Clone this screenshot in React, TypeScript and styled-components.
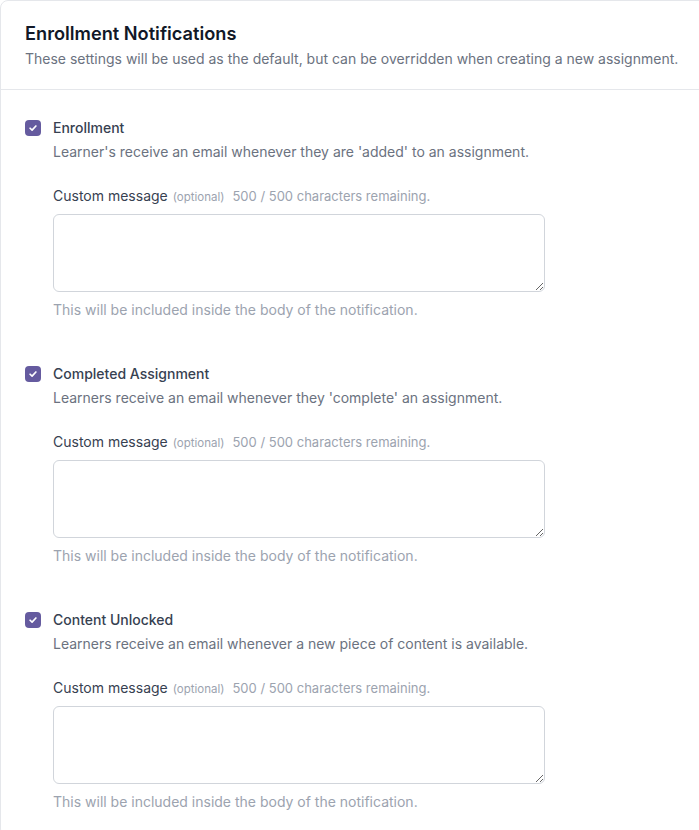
import { useState } from 'react';
import styled, { createGlobalStyle } from 'styled-components';

const GlobalStyle = createGlobalStyle`
  body {
    margin: 0;
    background: #ffffff;
    font-family: Inter, 'Noto Sans', sans-serif;
    overflow: hidden;
  }
`;

const Card = styled.div`
  width: 740px;
  border: 1px solid #e5e7eb;
  border-radius: 8px;
  background: #ffffff;
`;

const Header = styled.div`
  padding: 20px 24px;
  border-bottom: 1px solid #e5e7eb;
`;

const Title = styled.h2`
  margin: 0;
  font-size: 18.2px;
  line-height: 24px;
  font-weight: 600;
  color: #111827;
`;

const Subtitle = styled.p`
  margin: 4px 0 0;
  font-size: 14px;
  line-height: 20px;
  color: #6b7280;
`;

const Body = styled.div`
  padding: 28px 24px 24px;
  display: flex;
  flex-direction: column;
  gap: 44px;
`;

const Section = styled.div`
  display: grid;
  grid-template-columns: 16px 1fr;
  column-gap: 12px;
`;

const CheckBox = styled.button<{ $checked: boolean }>`
  width: 16px;
  height: 16px;
  margin-top: 2px;
  padding: 0;
  border: none;
  border-radius: 4px;
  background: ${(p) => (p.$checked ? '#655b9f' : '#ffffff')};
  box-shadow: ${(p) => (p.$checked ? 'none' : 'inset 0 0 0 1px #d1d5db')};
  display: flex;
  align-items: center;
  justify-content: center;
  cursor: pointer;
`;

const Content = styled.div`
  display: flex;
  flex-direction: column;
`;

const Label = styled.label`
  font-size: 14px;
  line-height: 20px;
  font-weight: 500;
  color: #374151;
`;

const Description = styled.p`
  margin: 4px 0 0;
  font-size: 14px;
  line-height: 20px;
  color: #6b7280;
`;

const FieldLabel = styled.div`
  margin-top: 24px;
  display: flex;
  align-items: baseline;
  gap: 8px;
  font-size: 14px;
  line-height: 20px;
  color: #374151;
`;

const Optional = styled.span`
  margin-left: -3px;
  font-size: 11.5px;
  color: #9ca3af;
`;

const Remaining = styled.span`
  font-size: 13px;
  color: #9ca3af;
`;

const TextArea = styled.textarea`
  box-sizing: border-box;
  margin-top: 7px;
  width: 492px;
  height: 78px;
  padding: 8px 12px;
  border: 1px solid #d1d5db;
  border-radius: 6px;
  font-family: inherit;
  font-size: 14px;
  resize: vertical;
  outline: none;
`;

const Help = styled.p`
  margin: 8px 0 0;
  font-size: 14px;
  line-height: 20px;
  color: #9ca3af;
`;

interface Notification {
  id: string;
  title: string;
  description: string;
}

const notifications: Notification[] = [
  {
    id: 'enrollment',
    title: 'Enrollment',
    description: "Learner's receive an email whenever they are 'added' to an assignment.",
  },
  {
    id: 'completed',
    title: 'Completed Assignment',
    description: "Learners receive an email whenever they 'complete' an assignment.",
  },
  {
    id: 'unlocked',
    title: 'Content Unlocked',
    description: 'Learners receive an email whenever a new piece of content is available.',
  },
];

const MAX = 500;

function NotificationRow({ item }: { item: Notification }) {
  const [checked, setChecked] = useState(true);
  const [message, setMessage] = useState('');

  return (
    <Section>
      <CheckBox
        $checked={checked}
        aria-pressed={checked}
        onClick={() => setChecked((c) => !c)}
        type="button">
        {checked && (
          <svg width="10" height="10" viewBox="0 0 12 12" fill="none">
            <path
              d="M2.5 6.3 4.9 8.6 9.5 3.6"
              stroke="#ffffff"
              strokeWidth="2"
              strokeLinecap="round"
              strokeLinejoin="round"
            />
          </svg>
        )}
      </CheckBox>
      <Content>
        <Label>{item.title}</Label>
        <Description>{item.description}</Description>
        <FieldLabel>
          <span>Custom message</span>
          <Optional>(optional)</Optional>
          <Remaining>
            {MAX - message.length} / {MAX} characters remaining.
          </Remaining>
        </FieldLabel>
        <TextArea
          maxLength={MAX}
          value={message}
          onChange={(e) => setMessage(e.target.value)}
        />
        <Help>This will be included inside the body of the notification.</Help>
      </Content>
    </Section>
  );
}

export default function App() {
  return (
    <>
      <GlobalStyle />
      <Card>
        <Header>
          <Title>Enrollment Notifications</Title>
          <Subtitle>
            These settings will be used as the default, but can be overridden
            when creating a new assignment.
          </Subtitle>
        </Header>
        <Body>
          {notifications.map((n) => (
            <NotificationRow key={n.id} item={n} />
          ))}
        </Body>
      </Card>
    </>
  );
}
